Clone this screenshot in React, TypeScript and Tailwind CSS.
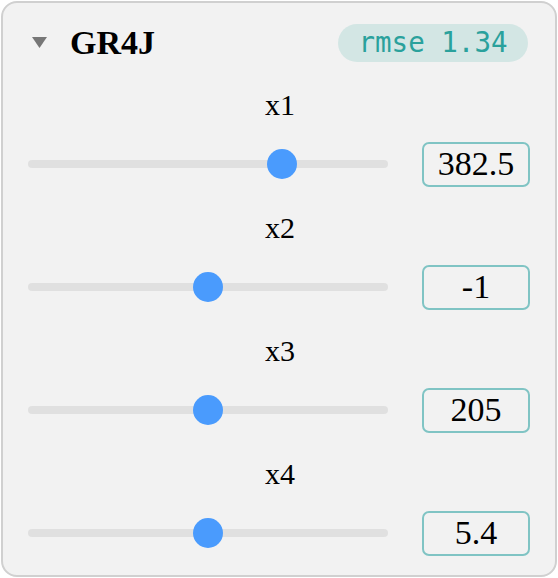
const params = [
  { name: "x1", value: "382.5", frac: 0.724 },
  { name: "x2", value: "-1", frac: 0.5 },
  { name: "x3", value: "205", frac: 0.5 },
  { name: "x4", value: "5.4", frac: 0.5 },
];

function Slider({ frac }: { frac: number }) {
  return (
    <div className="relative w-[360px] h-[30px] flex items-center shrink-0">
      <div className="w-full h-[8px] rounded-full bg-[#e0e0e0]" />
      <div
        className="absolute top-0 w-[30px] h-[30px] rounded-full bg-[#4a9bfd]"
        style={{ left: `${frac * 330}px` }}
      />
    </div>
  );
}

export default function App() {
  return (
    <div className="p-[1px] bg-white">
      <div
        className="w-[556px] h-[576px] border-2 border-[#d0d0d0] rounded-[16px] bg-[#f2f2f2] pt-[21px] pl-[25px] pr-[23px]"
        style={{ fontFamily: '"Liberation Serif", serif' }}
      >
        <div className="flex items-center h-[38px]">
          <svg width="15" height="11" viewBox="0 0 15 11" className="ml-[4px] mt-[-2px]">
            <polygon points="0,0 15,0 7.5,11" fill="#777777" />
          </svg>
          <div className="ml-[23px] text-[34px] font-bold text-black leading-none">GR4J</div>
          <div
            className="ml-auto mr-[4px] h-[38px] w-[190px] rounded-full bg-[#d3e6e4] text-[#2aa19c] text-[27.5px] flex items-center justify-center"
            style={{ fontFamily: '"DejaVu Sans Mono", monospace' }}
          >
            rmse 1.34
          </div>
        </div>
        <div className="mt-[22px] flex flex-col">
          {params.map((p) => (
            <div key={p.name} className="flex flex-col h-[123px]">
              <div className="h-[40px] flex items-center justify-center text-[30px] text-black">
                {p.name}
              </div>
              <div className="mt-[17px] h-[46px] flex items-center">
                <Slider frac={p.frac} />
                <div className="ml-[34px] w-[108px] h-[45px] shrink-0 border-2 border-[#80c4c4] rounded-[7px] flex items-center justify-center text-[34px] text-black leading-none">
                  {p.value}
                </div>
              </div>
            </div>
          ))}
        </div>
      </div>
    </div>
  );
}
